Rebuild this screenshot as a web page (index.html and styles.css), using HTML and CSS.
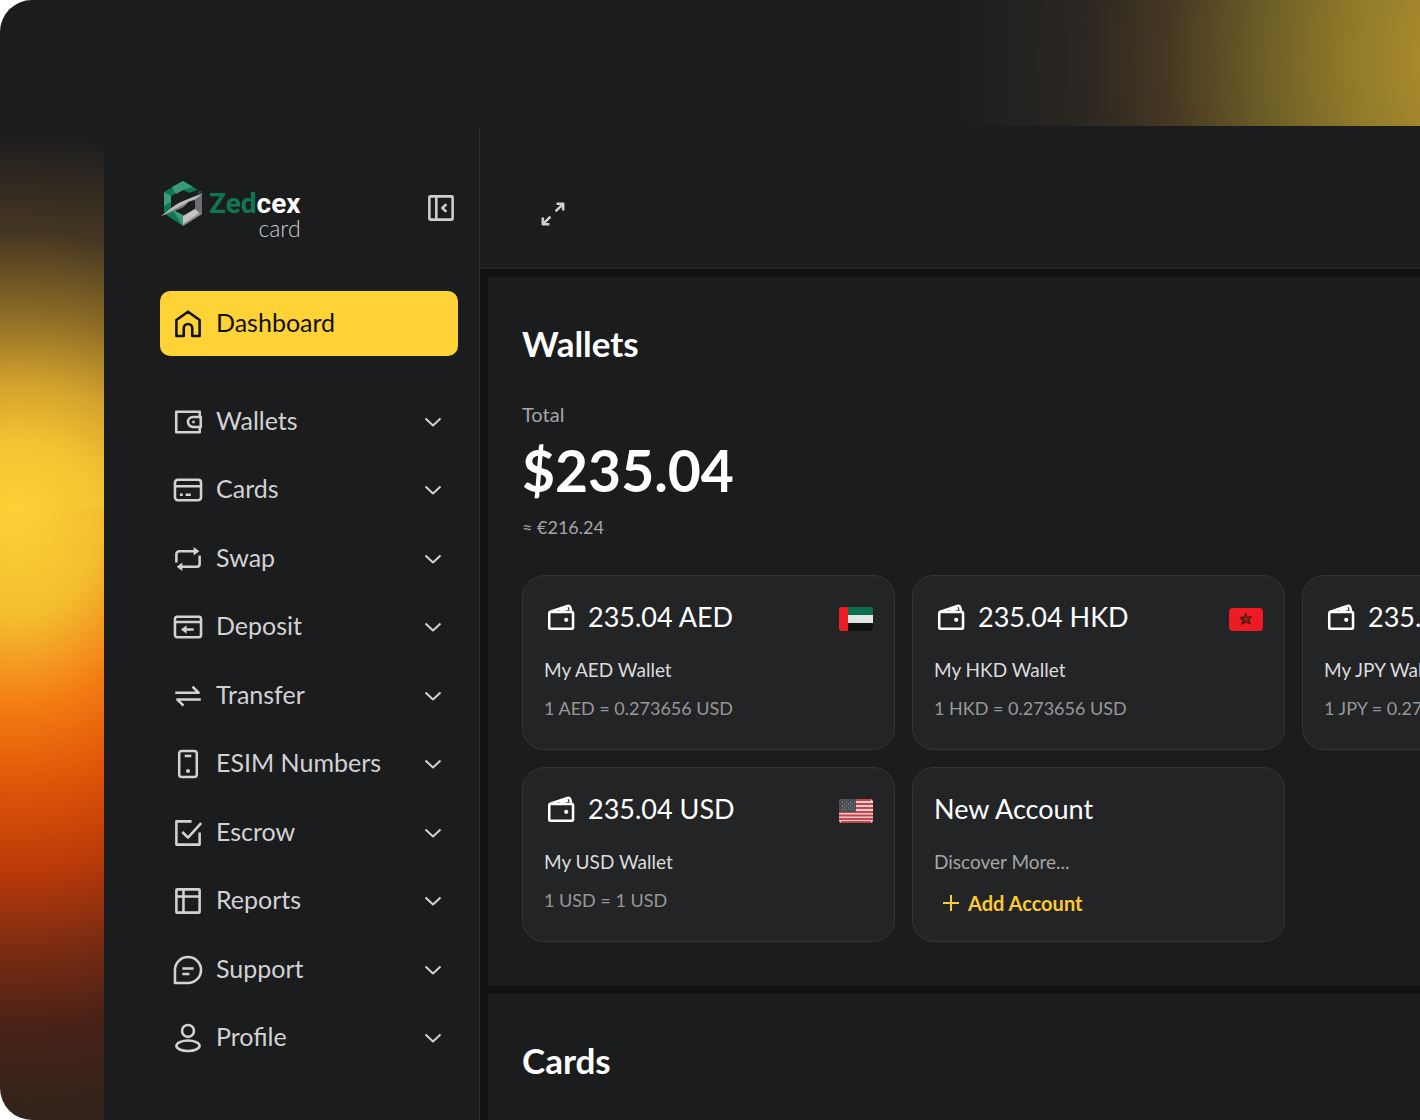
FILE: index.html
```
<!DOCTYPE html>
<html lang="en">
<head>
<meta charset="utf-8">
<meta name="viewport" content="width=device-width, initial-scale=1">
<title>Zedcex Card - Dashboard</title>
<link rel="stylesheet" href="styles.css">
</head>
<body>

<!-- shared icons -->
<svg class="sprite" aria-hidden="true">
  <symbol id="chevron" viewBox="0 0 24 24"><path d="M4.500 8.500l7.500 7 7.500-7"/></symbol>
  <symbol id="purse" viewBox="0 0 24 24">
    <rect x="3.700" y="8.500" width="16.800" height="11.800" rx=".8"/>
    <path d="M4 8.500l12.500-4.300c1-.3 1.700.2 2 1l.7 2.800M11 8l6-2"/>
    <circle class="dot" cx="15.700" cy="14" r="1.500"/>
  </symbol>
</svg>

<div class="scene">
  <div class="app">

    <aside class="sidebar">
      <div class="brand-row">
        <a class="brand" href="#">
          <svg class="brand-mark" viewBox="0 0 42 46" aria-hidden="true">
            <path fill="#0f7752" d="M3 12L22 1l19 11-8 3-11-5-12 6v13l-7 4z"/>
            <path fill="#3a9a7b" d="M22 1l10 6-10 3-7 4-4-7z"/>
            <path fill="#3a9a7b" d="M3 12l7 4v6l-7 4z"/>
            <path fill="#0f7752" d="M4 34l8-4 10 5v11z"/>
            <path fill="#3a9a7b" d="M12 30l10 5v11l-6-9z"/>
            <path fill="#8f9092" d="M41 14v20L22 46V36l12-7v-9l-9 2z"/>
            <path fill="#6d6e71" d="M34 20l7-6v20l-7-5z"/>
            <path fill="#c4c4c6" d="M22 36l12-7 4 4-16 11z"/>
            <path fill="#1b1c1e" d="M13 19l28-11-6 7-20 7v4l-3 1z"/>
            <path fill="#b9babc" d="M0 36c8-6 15-13 27-17l15-6c-5 5-10 7-15 9-3 5-9 7-14 9-5 2-8 3-13 5z"/>
            <path fill="#77787a" d="M0 36l18-9 9-5c-3 5-8 7-14 9z"/>
          </svg>
          <span class="brand-text">
            <span class="brand-name"><span class="green">Zed</span>cex</span>
            <span class="brand-sub">card</span>
          </span>
        </a>
        <button class="icon-btn" type="button" aria-label="Collapse menu">
          <svg class="icon" viewBox="0 0 24 24"><rect x="3.800" y="3.800" width="16.400" height="16.400" rx=".6"/><path d="M8.700 3.800v16.400M15.800 9.300L13 12l2.800 2.700"/></svg>
        </button>
      </div>

      <nav class="nav">
        <a class="nav-link active" href="#">
          <svg class="icon" viewBox="0 0 24 24"><path d="M9 20.500H3.800V9.200L12 3.300l8.200 5.900v11.300H15V15a3 3 0 0 0-6 0z"/></svg>
          <span>Dashboard</span>
        </a>
        <ul class="nav-list">
          <li><a class="nav-link" href="#">
            <svg class="icon" viewBox="0 0 24 24"><path d="M20.300 8V4.800H3.700v14.400h16.600V16"/><path d="M21 8.500h-5.500a3.500 3.500 0 0 0 0 7H21z"/><path d="M15 12h1.700"/></svg>
            <span>Wallets</span><svg class="chev"><use href="#chevron"/></svg></a></li>
          <li><a class="nav-link" href="#">
            <svg class="icon" viewBox="0 0 24 24"><rect x="2.800" y="4.800" width="18.400" height="14.400" rx="2"/><path d="M3 9.300h18M6.300 15.300h2M10.300 15.300h3.700"/></svg>
            <span>Cards</span><svg class="chev"><use href="#chevron"/></svg></a></li>
          <li><a class="nav-link" href="#">
            <svg class="icon" viewBox="0 0 24 24"><path d="M3.800 14.500V8.500a2 2 0 0 1 2-2H17M20.200 9.500v6a2 2 0 0 1-2 2H7"/><path class="fill" d="M16 3.500l4 3-4 3zM8 14.500l-4 3 4 3z"/></svg>
            <span>Swap</span><svg class="chev"><use href="#chevron"/></svg></a></li>
          <li><a class="nav-link" href="#">
            <svg class="icon" viewBox="0 0 24 24"><rect x="2.800" y="4.800" width="18.400" height="14.400" rx="1.500"/><path d="M3 8.500h18M10 13.700h6"/><path class="fill" d="M11 10.700v6l-4-3z"/></svg>
            <span>Deposit</span><svg class="chev"><use href="#chevron"/></svg></a></li>
          <li><a class="nav-link" href="#">
            <svg class="icon" viewBox="0 0 24 24"><path d="M3 9.700h16.500l-4.300-4.300M21 14.500H4.500l4.300 4.300"/></svg>
            <span>Transfer</span><svg class="chev"><use href="#chevron"/></svg></a></li>
          <li><a class="nav-link" href="#">
            <svg class="icon" viewBox="0 0 24 24"><rect x="5.800" y="2.800" width="12.400" height="18.400" rx="1.800"/><path d="M9.700 6.300h4.600"/><circle class="dot" cx="12" cy="17" r="1.400"/></svg>
            <span>ESIM Numbers</span><svg class="chev"><use href="#chevron"/></svg></a></li>
          <li><a class="nav-link" href="#">
            <svg class="icon" viewBox="0 0 24 24"><path d="M14.500 3.800H3.800v16.400h16.400v-8.500M8 11.300l4 4L21.300 5"/></svg>
            <span>Escrow</span><svg class="chev"><use href="#chevron"/></svg></a></li>
          <li><a class="nav-link" href="#">
            <svg class="icon" viewBox="0 0 24 24"><rect x="3.800" y="3.800" width="16.400" height="16.400" rx=".5"/><path d="M3.800 8.800h16.400M8.800 3.800v16.400"/></svg>
            <span>Reports</span><svg class="chev"><use href="#chevron"/></svg></a></li>
          <li><a class="nav-link" href="#">
            <svg class="icon" viewBox="0 0 24 24"><path d="M2.800 21.200V12a9.200 9.200 0 1 1 9.200 9.200zM8 11h8M8 14.800h5"/></svg>
            <span>Support</span><svg class="chev"><use href="#chevron"/></svg></a></li>
          <li><a class="nav-link" href="#">
            <svg class="icon" viewBox="0 0 24 24"><circle cx="12" cy="7" r="4.200"/><ellipse cx="12" cy="17.500" rx="8.200" ry="3.700"/></svg>
            <span>Profile</span><svg class="chev"><use href="#chevron"/></svg></a></li>
        </ul>
      </nav>
    </aside>

    <div class="main">
      <header class="topbar">
        <button class="icon-btn" type="button" aria-label="Full screen">
          <svg class="icon" viewBox="0 0 24 24"><path d="M13.800 10.200L19 5M10.200 13.800L5 19M14.500 4.800h4.700v4.700M9.500 19.200H4.800v-4.700"/></svg>
        </button>
      </header>

      <main class="content">
        <section class="panel">
          <h2>Wallets</h2>
          <p class="label">Total</p>
          <p class="total">$235.04</p>
          <p class="approx">≈ €216.24</p>

          <div class="wallets">
            <article class="wallet">
              <div class="wallet-head">
                <svg class="purse"><use href="#purse"/></svg>
                <h3>235.04 AED</h3>
                <svg class="flag" viewBox="0 0 34 24" aria-hidden="true">
                  <rect width="34" height="24" rx="3" fill="#ed1c24"/>
                  <path fill="#0b6e4c" d="M9 0h22a3 3 0 0 1 3 3v5H9z"/>
                  <path fill="#e4e4e4" d="M9 8h25v8H9z"/>
                  <path fill="#101112" d="M9 16h25v5a3 3 0 0 1-3 3H9z"/>
                </svg>
              </div>
              <p class="wallet-name">My AED Wallet</p>
              <p class="rate">1 AED = 0.273656 USD</p>
            </article>

            <article class="wallet">
              <div class="wallet-head">
                <svg class="purse"><use href="#purse"/></svg>
                <h3>235.04 HKD</h3>
                <svg class="flag" viewBox="0 0 34 24" aria-hidden="true">
                  <rect y="1" width="34" height="23" rx="4" fill="#ed1c24"/>
                  <path fill="#4a1a10" d="M16.500 5.500l2 4 5-.5-3.300 3.700 2.300 5.300-5.500-2.500-5 3 1.300-5-3.300-3.500 5-.5z"/>
                  <path stroke="#ed1c24" stroke-width=".8" fill="none" d="M17 12.500V9M17 12.500l3-1.500M17 12.500l2 2.500M17 12.500l-2 2.500M17 12.500l-3-1.500"/>
                </svg>
              </div>
              <p class="wallet-name">My HKD Wallet</p>
              <p class="rate">1 HKD = 0.273656 USD</p>
            </article>

            <article class="wallet">
              <div class="wallet-head">
                <svg class="purse"><use href="#purse"/></svg>
                <h3>235.04 JPY</h3>
                <svg class="flag" viewBox="0 0 34 24" aria-hidden="true">
                  <rect width="34" height="24" rx="3" fill="#eee"/>
                  <circle cx="17" cy="12" r="6" fill="#ed1c24"/>
                </svg>
              </div>
              <p class="wallet-name">My JPY Wallet</p>
              <p class="rate">1 JPY = 0.273656 USD</p>
            </article>

            <article class="wallet">
              <div class="wallet-head">
                <svg class="purse"><use href="#purse"/></svg>
                <h3>235.04 USD</h3>
                <svg class="flag" viewBox="0 0 34 24" aria-hidden="true">
                  <rect width="34" height="24" rx="3" fill="#eccdd0"/>
                  <path stroke="#c8434c" stroke-width="2" d="M2 1h30M0 5h34M0 9h34M0 13h34M0 16.500h34M0 20h34M2 23h30"/>
                  <path fill="#4b4d52" d="M3 0h14v13H0V3a3 3 0 0 1 3-3z"/>
                  <path stroke="#a3a4a8" stroke-dasharray="1 3" d="M3 3h13M5 5h11M3 7h13M5 9h11M3 11h13"/>
                </svg>
              </div>
              <p class="wallet-name">My USD Wallet</p>
              <p class="rate">1 USD = 1 USD</p>
            </article>

            <article class="wallet">
              <div class="wallet-head">
                <h3>New Account</h3>
              </div>
              <p class="discover">Discover More...</p>
              <button class="add-btn" type="button">
                <svg viewBox="0 0 18 18" aria-hidden="true"><path d="M9 1v16M1 9h16"/></svg>
                Add Account
              </button>
            </article>
          </div>
        </section>

        <section class="panel grow">
          <h2>Cards</h2>
        </section>
      </main>
    </div>

  </div>
</div>

</body>
</html>
```
FILE: styles.css
```
* {
  box-sizing: border-box;
}
body {
  margin: 0;
  background: #fff;
  color: #fff;
  font-family: Lato, "Open Sans", sans-serif;
  font-size: 20px;
  line-height: 24px;
}
h2, h3, p, ul {
  margin: 0;
  padding: 0;
}
a {
  color: inherit;
  text-decoration: none;
}
button {
  font: inherit;
  color: inherit;
  background: none;
  border: 0;
  padding: 0;
  cursor: pointer;
}
.sprite {
  display: none;
}

/* backdrop with the two glows */
.scene {
  display: flex;
  min-height: 100vh;
  padding: 126px 0 0 104px;
  border-radius: 32px 0 0 32px;
  overflow: hidden;
  background-color: #1b1c1e;
  background-image:
    radial-gradient(ellipse 600px 700px at calc(100% + 90px) 60px, #b8962e 0, #a8892d 15%, #8d7829 28%, #6b5c27 42%, #463822 57%, #2b2722 71%, #1b1c1e 95%),
    radial-gradient(ellipse 500px 380px at 15px 100%, #fed136 0, #f4c332 18%, #d3a32d 33%, #8a6a25 52%, #453622 73%, #1b1c1e 100%),
    radial-gradient(ellipse 500px 600px at 15px 0, #fed136 0, #f4bd30 18%, #f37b13 33%, #e05808 45%, #bb3a08 60%, #7d2c12 73%, #4a2216 86%, #32231b 100%);
  background-size: 100% 126px, 104px 384px, 104px calc(100% - 510px);
  background-position: 0 0, 0 126px, 0 510px;
  background-repeat: no-repeat;
}
.app {
  flex: 1;
  display: flex;
  min-width: 0;
  background: #1b1c1e;
  border-top-left-radius: 24px;
}

/* sidebar */
.sidebar {
  flex: 0 0 376px;
  display: flex;
  flex-direction: column;
  padding: 54px 21px 49px 56px;
  border-right: 1px solid #2b2c2e;
}
.brand-row {
  display: flex;
  justify-content: space-between;
  align-items: flex-start;
  height: 111px;
}
.brand {
  display: flex;
  gap: 5px;
}
.brand-mark {
  width: 44px;
  height: 46px;
}
.brand-text {
  display: flex;
  flex-direction: column;
  align-items: flex-end;
  padding-top: 10px;
}
.brand-name {
  font-family: "Liberation Sans Narrow", Roboto, sans-serif;
  font-size: 28px;
  line-height: 28px;
  font-weight: bold;
}
.green {
  color: #0f7752;
}
.brand-sub {
  color: #cfcfd0;
  font-size: 23px;
  line-height: 20px;
  font-weight: 300;
}
.brand-row .icon-btn {
  margin-top: 11px;
}
.icon-btn {
  display: flex;
  color: #cfcfd0;
}
.icon, .chev, .purse {
  flex: none;
  width: 34px;
  height: 34px;
  fill: none;
  stroke: currentColor;
  stroke-width: 1.8;
  stroke-linejoin: round;
}
.icon .fill, .dot {
  fill: currentColor;
  stroke: none;
}
.nav {
  flex: 1;
  display: flex;
  flex-direction: column;
  gap: 33px;
}
.nav-list {
  flex: 1;
  display: flex;
  flex-direction: column;
  justify-content: space-between;
  list-style: none;
}
.nav-link {
  display: flex;
  align-items: center;
  gap: 11px;
  height: 65px;
  padding: 0 13px 0 11px;
  border-radius: 10px;
  color: #d2d2d3;
  font-size: 25px;
}
.nav-link span {
  flex: 1;
  padding-bottom: 4px;
}
.nav-link.active {
  background: #ffd236;
  color: #111;
}
.chev {
  width: 24px;
  height: 24px;
  stroke-width: 2;
}

/* main column */
.main {
  flex: 1;
  min-width: 0;
  display: flex;
  flex-direction: column;
}
.topbar {
  height: 143px;
  padding: 71px 56px 0;
  border-bottom: 2px solid #242526;
}
.content {
  flex: 1;
  display: flex;
  flex-direction: column;
  gap: 8px;
  padding: 8px 0 0 8px;
  background: #101112;
}
.panel {
  padding: 46px 34px 44px;
  background: #1b1c1e;
  overflow: hidden;
}
.panel.grow {
  flex: 1;
  padding-bottom: 24px;
}
.panel h2 {
  font-size: 35px;
  line-height: 40px;
}
.label {
  margin-top: 39px;
  color: #a5a6a7;
}
.total {
  margin-top: 12px;
  font-size: 57px;
  line-height: 64px;
  font-weight: bold;
}
.approx {
  margin-top: 13px;
  color: #a5a6a7;
  font-size: 18px;
}

/* wallet cards */
.wallets {
  display: grid;
  grid-template-columns: repeat(3, 373px);
  grid-auto-rows: minmax(175px, auto);
  gap: 17px;
  margin-top: 36px;
}
.wallet {
  padding: 23px 21px 26px;
  background: #232426;
  border: 1px solid #343537;
  border-radius: 22px;
}
.wallet-head {
  display: flex;
  align-items: center;
  height: 36px;
}
.wallet-head h3 {
  flex: 1;
  font-size: 27px;
  font-weight: normal;
}
.purse {
  margin-right: 10px;
}
.flag {
  width: 34px;
  height: 24px;
  margin-top: 4px;
}
.wallet-name {
  margin-top: 23px;
  color: #dcdcdd;
  font-size: 19px;
}
.rate {
  margin-top: 14px;
  color: #97989a;
  font-size: 18px;
}
.discover {
  margin-top: 23px;
  color: #a5a6a7;
  font-size: 19px;
}
.add-btn {
  display: flex;
  align-items: center;
  gap: 8px;
  margin: 17px 0 0 8px;
  color: #fcca35;
  font-weight: bold;
}
.add-btn svg {
  width: 18px;
  height: 18px;
  stroke: currentColor;
  stroke-width: 2;
}
```
